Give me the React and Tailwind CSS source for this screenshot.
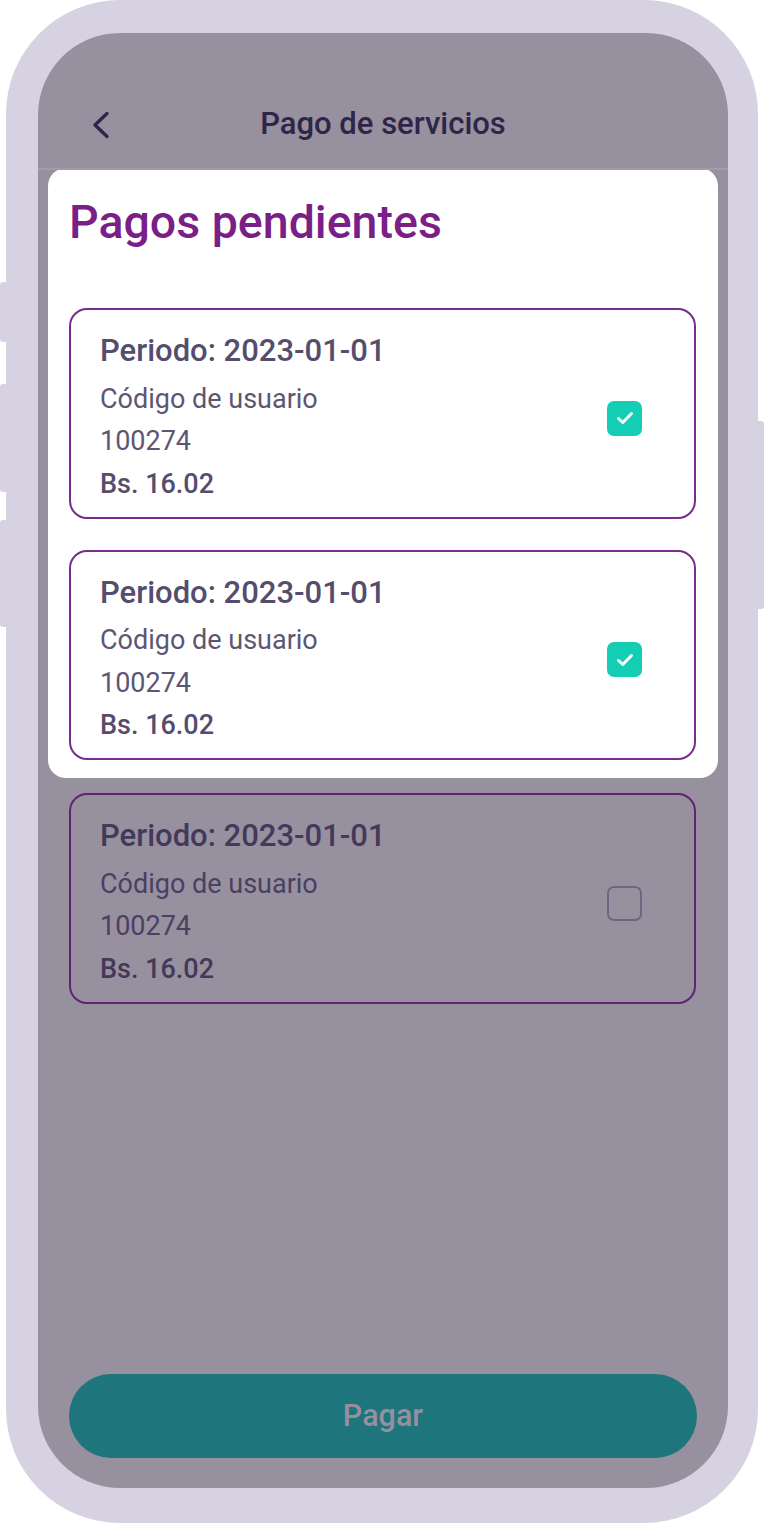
const items = [
  { periodo: '2023-01-01', codigo: '100274', monto: 'Bs. 16.02', checked: true },
  { periodo: '2023-01-01', codigo: '100274', monto: 'Bs. 16.02', checked: true },
  { periodo: '2023-01-01', codigo: '100274', monto: 'Bs. 16.02', checked: false },
]

function Checkbox({ checked, dim }) {
  if (checked) {
    return (
      <div className="w-[35px] h-[35px] rounded-[7px] bg-[#13cdb5] flex items-center justify-center">
        <svg width="18" height="14" viewBox="0 0 18 14" fill="none">
          <polyline points="2.5,7.5 6.8,11.5 15.5,2.5" stroke="white" strokeWidth="3" strokeLinecap="round" strokeLinejoin="round" />
        </svg>
      </div>
    )
  }
  return <div className={`w-[35px] h-[35px] rounded-[7px] border-2 ${dim ? 'border-[#6f6683]' : 'border-[#c9c5d3]'}`} />
}

function PaymentCard({ item, dim }) {
  return (
    <div
      className={`flex items-center justify-between rounded-[18px] border-2 pl-[29px] pr-[52px] pt-[21px] pb-[11.5px] ${
        dim ? 'border-[#5e2572]' : 'border-[#7b2b8f] bg-white'
      }`}
    >
      <div>
        <p className={`text-[31px] leading-[40px] font-medium ${dim ? 'text-[#43395a]' : 'text-[#554d6d]'}`}>
          Periodo: {item.periodo}
        </p>
        <div className={`mt-[6.5px] text-[27px] leading-[42.5px] ${dim ? 'text-[#4a4062]' : 'text-[#5d5673]'}`}>
          <p>Código de usuario</p>
          <p>{item.codigo}</p>
          <p className={`font-medium ${dim ? 'text-[#43395a]' : 'text-[#554d6d]'}`}>{item.monto}</p>
        </div>
      </div>
      <Checkbox checked={item.checked} dim={dim} />
    </div>
  )
}

export default function App() {
  return (
    <div className="relative w-[764px] h-[1523px] bg-white" style={{ fontFamily: 'Roboto, "Noto Sans", sans-serif' }}>
      {/* side buttons */}
      <div className="absolute left-0 top-[282px] w-[8px] h-[60px] rounded-l-[3px] bg-[#d6d2e2]" />
      <div className="absolute left-0 top-[384px] w-[8px] h-[108px] rounded-l-[3px] bg-[#d6d2e2]" />
      <div className="absolute left-0 top-[520px] w-[8px] h-[107px] rounded-l-[3px] bg-[#d6d2e2]" />
      <div className="absolute right-0 top-[421px] w-[8px] h-[188px] rounded-r-[3px] bg-[#d6d2e2]" />

      <div className="mx-[6px] h-full rounded-[114px] bg-[#d6d2e2] pt-[33px] pb-[35px] pl-[32px] pr-[30px]">
        <div className="h-full rounded-[82px] bg-[#97909f] flex flex-col overflow-hidden">
          {/* header */}
          <div className="h-[137px] shrink-0 border-b-[2px] border-[#a29bab] pt-[71px] px-[52px] flex items-start relative">
            <svg width="20" height="28" viewBox="0 0 20 28" fill="none" className="mt-[7px]">
              <polyline points="17,2.5 5,14 17,25.5" stroke="#2e2547" strokeWidth="3.4" strokeLinecap="round" strokeLinejoin="round" />
            </svg>
            <p className="absolute left-0 right-0 top-[71px] text-center text-[31px] leading-[40px] font-medium text-[#2e2547] pointer-events-none">
              Pago de servicios
            </p>
          </div>

          {/* highlighted sheet */}
          <div className="mx-[10px] -mt-[2px] rounded-[18px] bg-white pt-[27px] pl-[21px] pr-[22px] pb-[18px]">
            <h1 className="text-[46.5px] leading-[54px] font-medium text-[#7a1f88]">Pagos pendientes</h1>
            <div className="mt-[59px] flex flex-col gap-[31px]">
              <PaymentCard item={items[0]} />
              <PaymentCard item={items[1]} />
            </div>
          </div>

          <div className="mt-[15px] ml-[31px] mr-[32px]">
            <PaymentCard item={items[2]} dim />
          </div>

          <div className="flex-1" />

          <button className="ml-[31px] mr-[31px] mb-[30px] h-[84px] rounded-full bg-[#1e757b] text-[30.5px] font-medium text-[#968fa0]">
            Pagar
          </button>
        </div>
      </div>
    </div>
  )
}
